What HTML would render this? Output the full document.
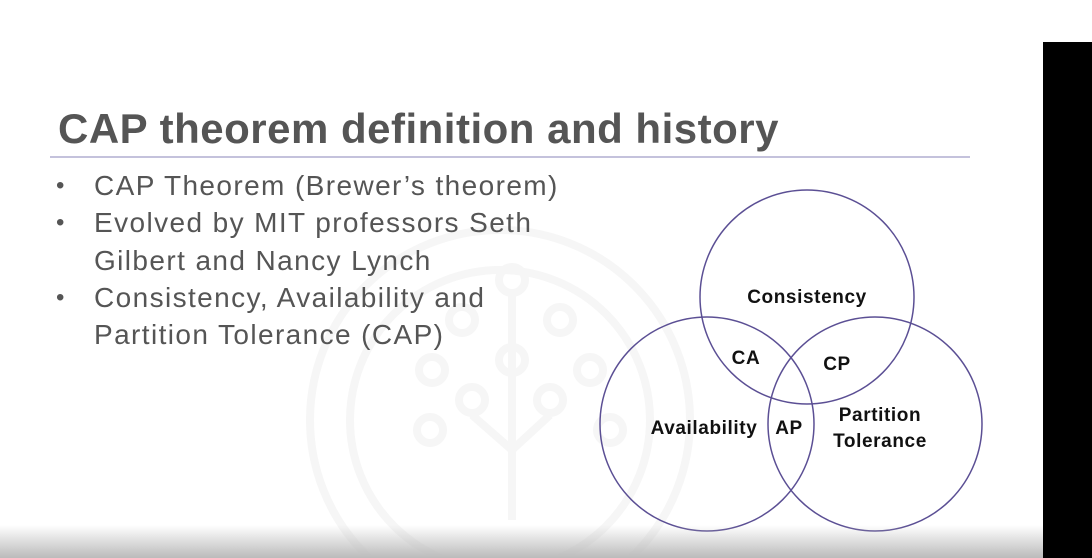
<!DOCTYPE html>
<html><head><style>
html,body{margin:0;width:1092px;height:558px;overflow:hidden}
body{background:#fff;position:relative;font-family:"Liberation Sans",sans-serif}
.t{position:absolute;left:58px;top:105px;font-size:42px;font-weight:bold;color:#555;letter-spacing:0.5px;white-space:nowrap}
.hr{position:absolute;left:50px;top:156px;width:920px;height:2px;background:#c4c2dc}
.b{position:absolute;left:56px;top:167px;font-size:28px;color:#555;line-height:37.3px;letter-spacing:1.4px;white-space:nowrap}
.b div{position:relative;padding-left:38px}
.b div.d:before{content:"•";position:absolute;left:0;font-size:24px}
.blk{position:absolute;left:1043px;top:42px;width:49px;height:516px;background:#000}
.fade{position:absolute;left:0;top:525px;width:1043px;height:33px;background:linear-gradient(#fff0,#bbb)}
</style></head><body>
<svg width="1092" height="558" style="position:absolute;left:0;top:0">
<g fill="none" stroke="#f6f6f6" stroke-width="8">
<circle cx="500" cy="420" r="190"/>
<circle cx="500" cy="420" r="150"/>
<circle cx="512" cy="280" r="13"/><circle cx="462" cy="320" r="13"/><circle cx="560" cy="320" r="13"/>
<circle cx="512" cy="360" r="13"/><circle cx="432" cy="370" r="13"/><circle cx="590" cy="370" r="13"/>
<circle cx="472" cy="400" r="13"/><circle cx="550" cy="400" r="13"/><circle cx="430" cy="430" r="13"/><circle cx="610" cy="430" r="13"/>
<path d="M512 295V520M472 415L512 450L550 415"/>
</g>
<g fill="none" stroke="#5b4f94" stroke-width="1.5">
<circle cx="807" cy="297" r="107"/>
<circle cx="707" cy="424" r="107"/>
<circle cx="875" cy="424" r="107"/>
</g>
<g font-family="Liberation Sans" font-weight="bold" font-size="19" fill="#111" text-anchor="middle" letter-spacing="0.6">
<text x="807" y="303">Consistency</text>
<text x="746" y="364">CA</text>
<text x="837" y="370">CP</text>
<text x="704" y="434">Availability</text>
<text x="789" y="434">AP</text>
<text x="880" y="421">Partition</text>
<text x="880" y="447">Tolerance</text>
</g>
</svg>
<div class="t">CAP theorem definition and history</div>
<div class="hr"></div>
<div class="b">
<div class="d">CAP Theorem (Brewer’s theorem)</div>
<div class="d">Evolved by MIT professors Seth</div>
<div>Gilbert and Nancy Lynch</div>
<div class="d">Consistency, Availability and</div>
<div>Partition Tolerance (CAP)</div>
</div>
<div class="fade"></div>
<div class="blk"></div>
</body></html>
